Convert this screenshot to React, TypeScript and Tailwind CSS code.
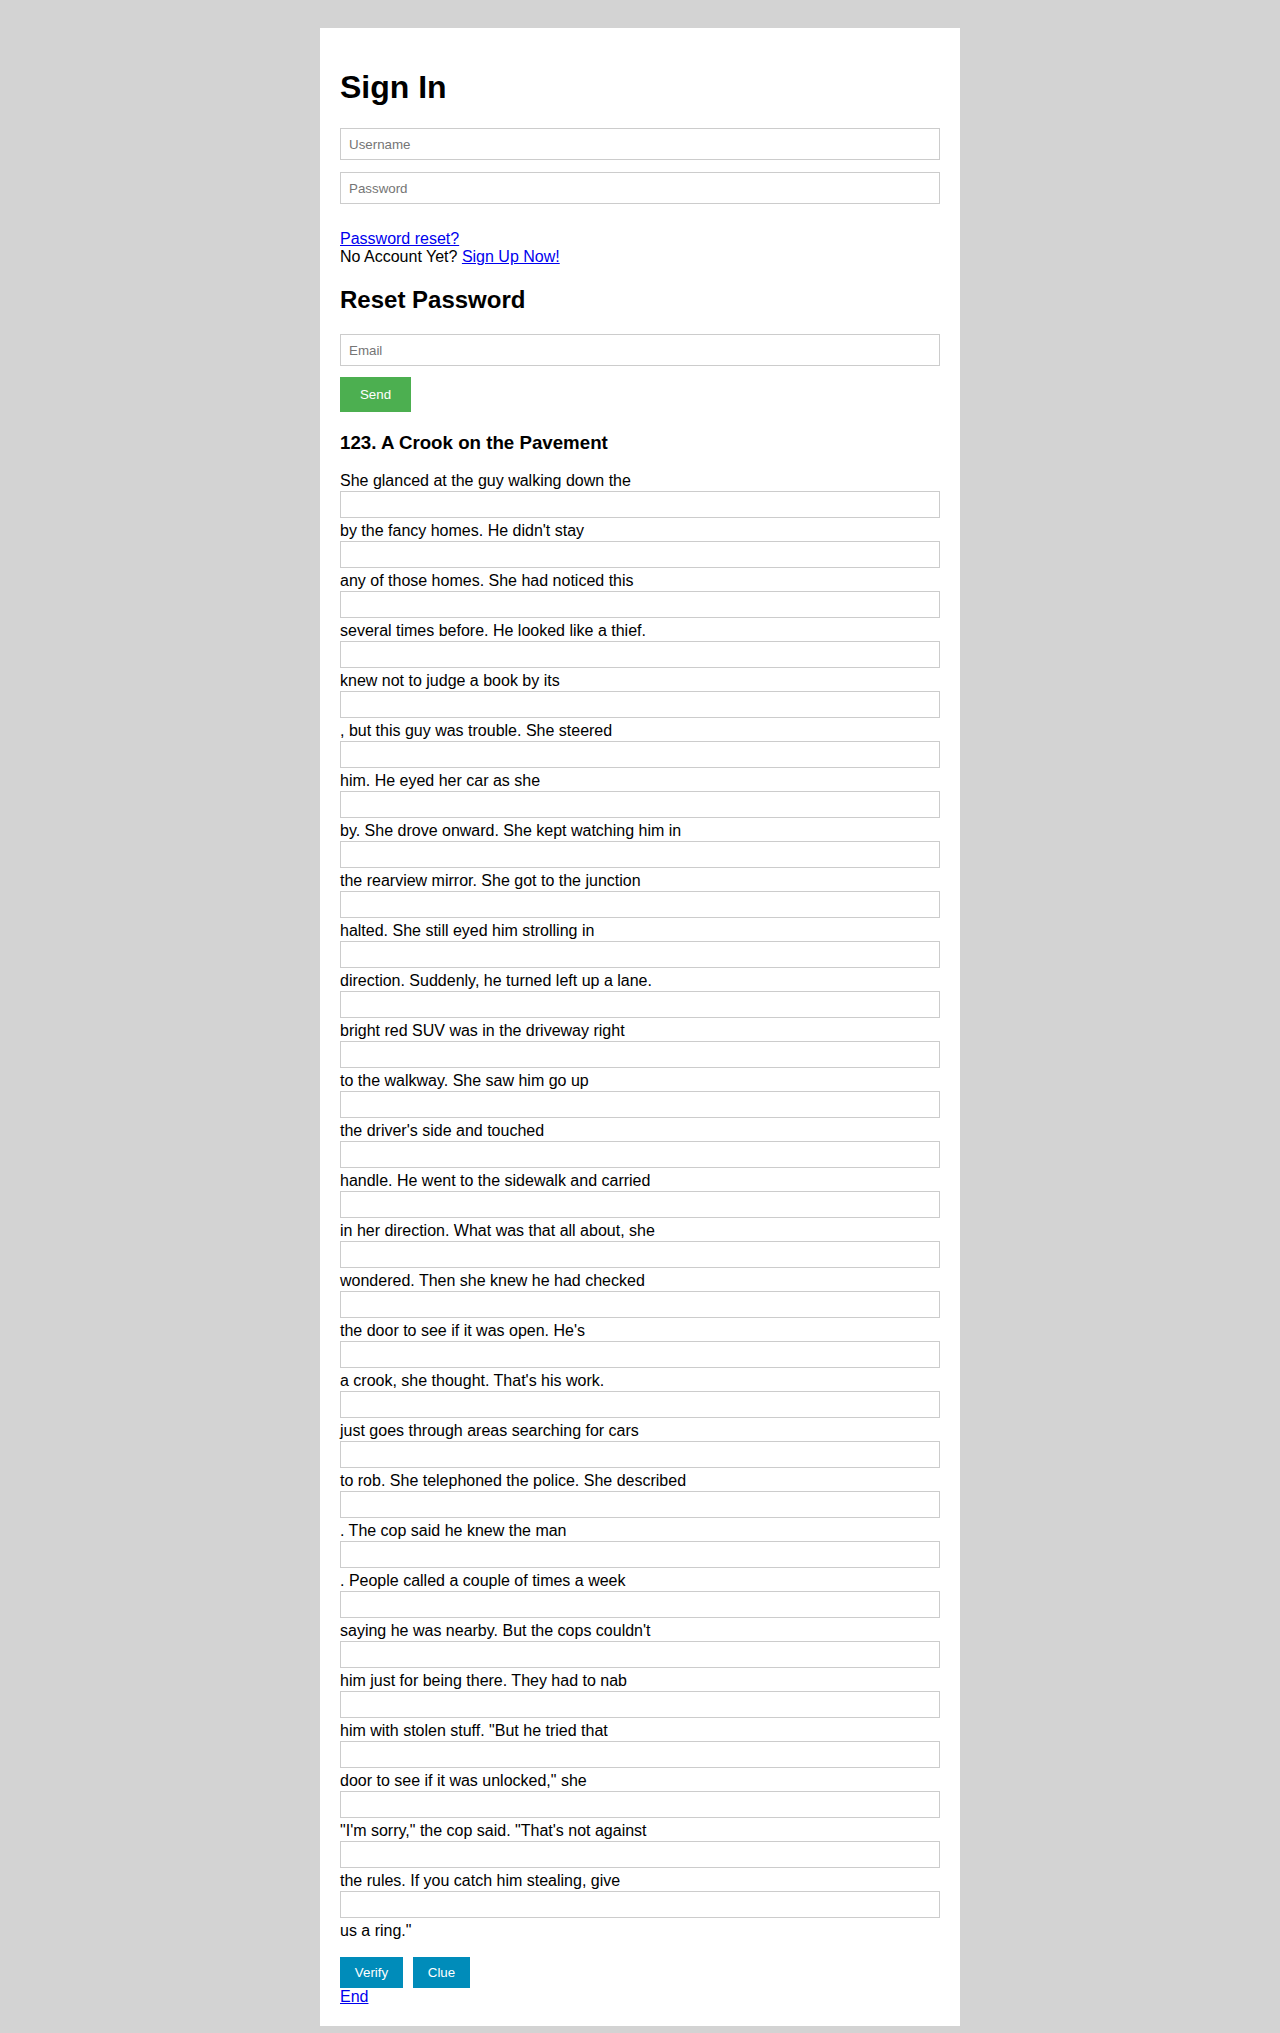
import React from "react";

const rows: string[] = [
  "She glanced at the guy walking down the",
  "by the fancy homes. He didn't stay",
  "any of those homes. She had noticed this",
  "several times before. He looked like a thief.",
  "knew not to judge a book by its",
  ", but this guy was trouble. She steered",
  "him. He eyed her car as she",
  "by. She drove onward. She kept watching him in",
  "the rearview mirror. She got to the junction",
  "halted. She still eyed him strolling in",
  "direction. Suddenly, he turned left up a lane.",
  "bright red SUV was in the driveway right",
  "to the walkway. She saw him go up",
  "the driver's side and touched",
  "handle. He went to the sidewalk and carried",
  "in her direction. What was that all about, she",
  "wondered. Then she knew he had checked",
  "the door to see if it was open. He's",
  "a crook, she thought. That's his work.",
  "just goes through areas searching for cars",
  "to rob. She telephoned the police. She described",
  ". The cop said he knew the man",
  ". People called a couple of times a week",
  "saying he was nearby. But the cops couldn't",
  "him just for being there. They had to nab",
  "him with stolen stuff. \"But he tried that",
  "door to see if it was unlocked,\" she",
  "\"I'm sorry,\" the cop said. \"That's not against",
  "the rules. If you catch him stealing, give",
];

const inputCls =
  "block w-full h-[32px] border border-[#cccccc] bg-white px-[8px] text-[13.33px] text-black placeholder:text-[#757575] outline-none";

export default function App() {
  return (
    <div className="min-h-[2033px] bg-[#d3d3d3] pt-[28px] pb-[7px] font-['Liberation_Sans',Arial,sans-serif] text-black">
      <div className="mx-auto w-[640px] bg-white p-[20px]">
        <h1 className="mt-[21px] mb-[22px] text-[32px] font-bold leading-[37px]">Sign In</h1>
        <input className={inputCls} placeholder="Username" />
        <input className={inputCls + " mt-[12px]"} type="password" placeholder="Password" />
        <div className="mt-[26px] text-[16px] leading-[18px]">
          <div>
            <a href="#" className="text-[#0000ee] underline">
              Password reset?
            </a>
          </div>
          <div>
            No Account Yet?{" "}
            <a href="#" className="text-[#0000ee] underline">
              Sign Up Now!
            </a>
          </div>
        </div>
        <h2 className="mt-[20px] mb-[20px] text-[24px] font-bold leading-[28px]">Reset Password</h2>
        <input className={inputCls} placeholder="Email" />
        <button className="mt-[11px] block h-[35px] w-[71px] bg-[#4caf50] text-[13.33px] text-white">
          Send
        </button>
        <h3 className="mt-[20px] mb-[19px] text-[18.72px] font-bold leading-[21px]">
          123. A Crook on the Pavement
        </h3>
        <div className="text-[16px] leading-[18px]">
          {rows.map((t, i) => (
            <div key={i}>
              <div className="whitespace-pre">{t}</div>
              <input className="mt-[1px] mb-[4px] block h-[27px] w-full border border-[#cccccc] bg-white px-[4px] text-[13.33px] outline-none" />
            </div>
          ))}
          <div>us a ring."</div>
        </div>
        <div className="mt-[17px] flex gap-[10px]">
          <button className="h-[31px] w-[63px] bg-[#008cba] text-[13.33px] text-white">Verify</button>
          <button className="h-[31px] w-[57px] bg-[#008cba] text-[13.33px] text-white">Clue</button>
        </div>
        <div className="text-[16px] leading-[18px]">
          <a href="#" className="text-[#0000ee] underline">
            End
          </a>
        </div>
      </div>
    </div>
  );
}
